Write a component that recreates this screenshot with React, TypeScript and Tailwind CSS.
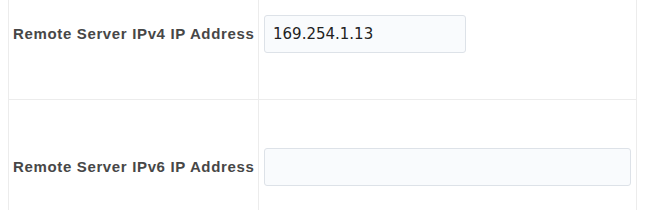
const cellLine = "border-[#ececec]";

function Label({ children }: { children: string }) {
  return (
    <span className="flex h-[38px] items-center whitespace-nowrap text-[15px] font-bold tracking-[0.65px] text-[#474747] font-['Liberation_Sans',sans-serif]">
      {children}
    </span>
  );
}

export default function App() {
  return (
    <div className="h-[210px] w-[654px] overflow-hidden bg-white">
      <div className="ml-2 w-[629px]">
        {/* IPv4 row */}
        <div className={`flex h-[100px] border-b ${cellLine}`}>
          <div className={`w-[251px] shrink-0 border-x ${cellLine} pl-1 pt-[15px]`}>
            <Label>Remote Server IPv4 IP Address</Label>
          </div>
          <div className={`flex-1 border-r ${cellLine} pl-[5px] pt-[15px]`}>
            <input
              readOnly
              value="169.254.1.13"
              className="h-[38px] w-[202px] rounded-[3px] border border-[#dde2e8] bg-[#f9fbfd] px-2 text-[15px] text-[#222] font-['DejaVu_Sans',sans-serif] outline-none"
            />
          </div>
        </div>

        {/* IPv6 row */}
        <div className="flex h-[120px]">
          <div className={`w-[251px] shrink-0 border-x ${cellLine} pl-1 pt-[48px]`}>
            <Label>Remote Server IPv6 IP Address</Label>
          </div>
          <div className={`flex-1 border-r ${cellLine} pl-[5px] pr-[5px] pt-[48px]`}>
            <input
              readOnly
              value=""
              className="h-[38px] w-full rounded-[3px] border border-[#dde2e8] bg-[#f9fbfd] px-2 text-[15px] text-[#222] font-['DejaVu_Sans',sans-serif] outline-none"
            />
          </div>
        </div>
      </div>
    </div>
  );
}
